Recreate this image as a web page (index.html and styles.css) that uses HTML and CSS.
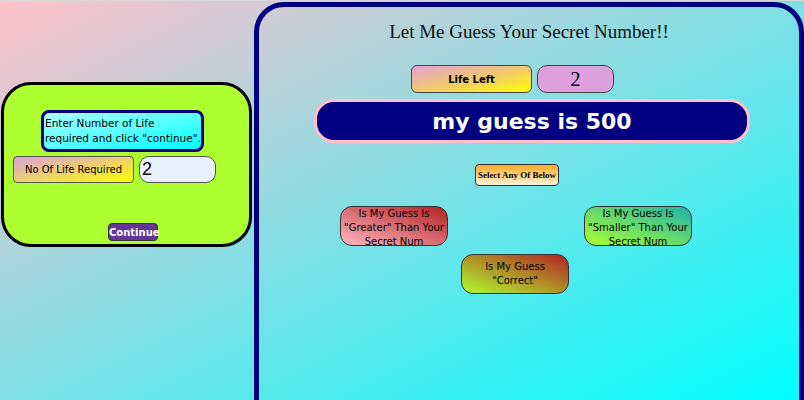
FILE: index.html
```html
<!DOCTYPE html>
<html>
<head>
<meta charset="utf-8">
<link rel="stylesheet" href="styles.css">
</head>
<body>
<div class="page">
  <div class="setup">
    <div class="instruct">Enter Number of Life<br>required and click "continue".</div>
    <div class="life-row">
      <div class="life-label">No Of Life Required</div>
      <input class="life-input" type="text" value="2">
    </div>
    <button class="continue">Continue</button>
  </div>
  <div class="game">
    <h1 class="title">Let Me Guess Your Secret Number!!</h1>
    <div class="left-row">
      <div class="left-label">Life Left</div>
      <div class="left-value">2</div>
    </div>
    <div class="banner">my guess is 500</div>
    <div class="select">Select Any Of Below</div>
    <div class="choices">
      <button class="choice greater">Is My Guess Is "Greater" Than Your Secret Num</button>
      <button class="choice smaller">Is My Guess Is "Smaller" Than Your Secret Num</button>
    </div>
    <button class="choice correct">Is My Guess "Correct"</button>
  </div>
</div>
</body>
</html>
```
FILE: styles.css
```css
html, body {
  margin: 0;
  padding: 0;
  height: 400px;
  overflow: hidden;
}
body {
  background: linear-gradient(to bottom right, #ffc0cb, #00ffff);
  border-top: 1px solid #d8d8d8;
  box-sizing: border-box;
  font-family: "Comic Sans MS", "DejaVu Sans", sans-serif;
}
.page {
  display: flex;
  align-items: flex-start;
}
.setup {
  box-sizing: border-box;
  margin: 81px 0 0 1px;
  width: 251px;
  height: 165px;
  background: #adff2f;
  border: 3px solid #000;
  border-radius: 30px;
  display: flex;
  flex-direction: column;
  align-items: flex-start;
}
.instruct {
  box-sizing: border-box;
  margin: 25px 0 0 37px;
  width: 163px;
  height: 42px;
  padding: 3px 0 0 1px;
  border: 3px solid #000080;
  border-radius: 8px;
  background: linear-gradient(to bottom right, #b0ffff, #00ffff);
  font-size: 10.5px;
  line-height: 15px;
  color: #000;
}
.life-row {
  display: flex;
  gap: 5px;
  margin: 4px 0 0 9px;
}
.life-label {
  box-sizing: border-box;
  width: 121px;
  height: 27px;
  border: 1px solid #555;
  border-radius: 4px;
  background: linear-gradient(to bottom right, #dda0dd, #ffff00);
  font-size: 10px;
  color: #000;
  display: flex;
  align-items: center;
  justify-content: center;
}
.life-input {
  box-sizing: border-box;
  width: 77px;
  height: 27px;
  border: 1px solid #555;
  border-radius: 10px;
  background: #e8f0fe;
  font-family: "Liberation Sans", Arial, sans-serif;
  font-size: 18px;
  padding: 0 2px;
  color: #000;
}
.continue {
  box-sizing: border-box;
  margin: 40px 0 0 104px;
  width: 50px;
  height: 18px;
  padding: 0;
  background: #663399;
  color: #fff;
  border: 1px solid #333;
  border-radius: 4px;
  font-family: inherit;
  font-size: 10px;
  font-weight: bold;
}
.game {
  box-sizing: border-box;
  margin: 1px 0 0 2px;
  width: 550px;
  height: 430px;
  border: 5px solid #000080;
  border-radius: 30px;
  display: flex;
  flex-direction: column;
  align-items: flex-start;
}
.title {
  margin: 14px 0 0 0;
  align-self: center;
  font-family: "Liberation Serif", "Times New Roman", serif;
  font-weight: normal;
  font-size: 19px;
  line-height: 22px;
  color: #111;
}
.left-row {
  display: flex;
  gap: 5px;
  margin: 22px 0 0 152px;
}
.left-label {
  box-sizing: border-box;
  width: 121px;
  height: 28px;
  border: 1px solid #444;
  border-radius: 6px;
  background: linear-gradient(to bottom right, #e4a0d4, #f3cc66 55%, #ffff00);
  font-size: 10px;
  font-weight: bold;
  display: flex;
  align-items: center;
  justify-content: center;
}
.left-value {
  box-sizing: border-box;
  width: 77px;
  height: 28px;
  border: 1px solid #444;
  border-radius: 10px;
  background: #dda0dd;
  font-family: "Liberation Serif", "Times New Roman", serif;
  font-size: 20px;
  display: flex;
  align-items: center;
  justify-content: center;
}
.banner {
  box-sizing: border-box;
  margin: 6px 0 0 55px;
  width: 436px;
  height: 44px;
  background: #000080;
  border: 3px solid #ffc0cb;
  border-radius: 20px;
  color: #fff;
  font-size: 22px;
  font-weight: bold;
  display: flex;
  align-items: center;
  justify-content: center;
}
.select {
  box-sizing: border-box;
  margin: 21px 0 0 216px;
  width: 84px;
  height: 22px;
  border: 1px solid #333;
  border-radius: 4px;
  background: linear-gradient(to bottom, #ffaa22, #fff3dd);
  font-family: "Liberation Serif", "Times New Roman", serif;
  font-weight: bold;
  font-size: 9px;
  display: flex;
  align-items: center;
  justify-content: center;
}
.choices {
  display: flex;
  gap: 136px;
  margin: 20px 0 0 81px;
}
.choice {
  box-sizing: border-box;
  width: 108px;
  height: 40px;
  padding: 0 2px;
  border: 1px solid #333;
  border-radius: 12px;
  font-family: inherit;
  font-size: 10px;
  line-height: 14px;
  color: #000;
  overflow: hidden;
}
.greater {
  background: linear-gradient(to bottom left, #b22222, #ffb6c1);
}
.smaller {
  background: linear-gradient(to bottom left, #20b2aa, #adff2f);
}
.correct {
  margin: 8px 0 0 202px;
  background: linear-gradient(to bottom left, #b22222, #adff2f);
}
```
